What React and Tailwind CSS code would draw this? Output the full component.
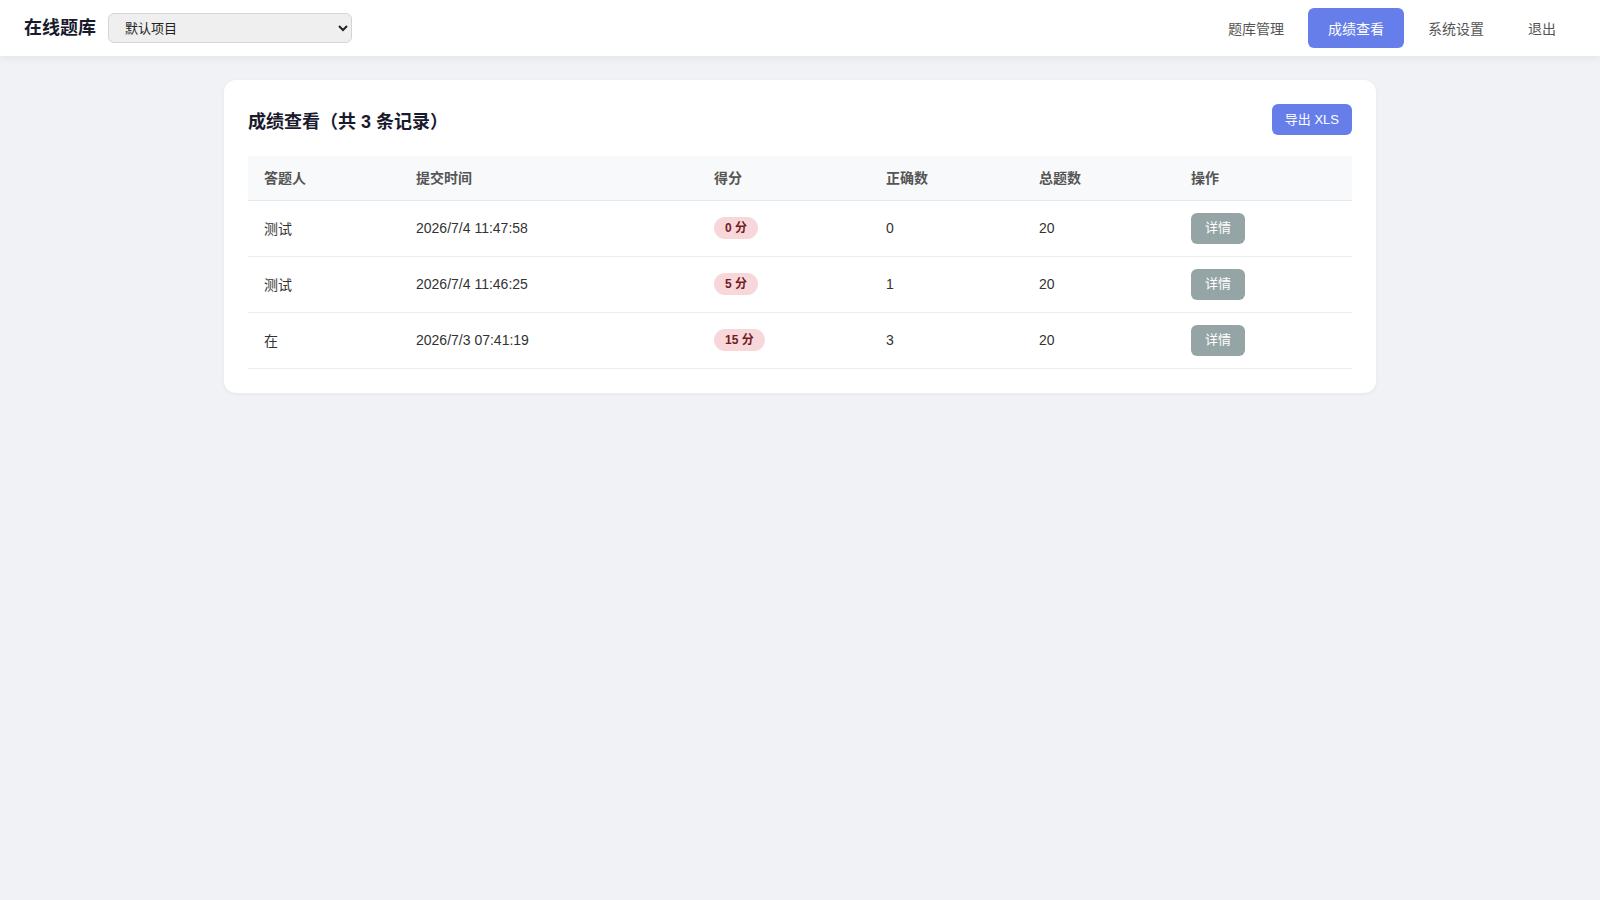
import React from 'react'

const records = [
  { name: '测试', time: '2026/7/4 11:47:58', score: 0, correct: 0, total: 20 },
  { name: '测试', time: '2026/7/4 11:46:25', score: 5, correct: 1, total: 20 },
  { name: '在', time: '2026/7/3 07:41:19', score: 15, correct: 3, total: 20 },
]

const navItems = ['题库管理', '成绩查看', '系统设置', '退出']

export default function App() {
  return (
    <div
      className="min-h-screen bg-[#f0f2f5] text-[#333]"
      style={{ fontFamily: '"Liberation Sans", "Noto Sans CJK SC", sans-serif' }}
    >
      {/* Top bar */}
      <header className="h-14 bg-white shadow-[0_2px_8px_rgba(0,0,0,0.06)] flex items-center justify-between pl-6 pr-6">
        <div className="flex items-center gap-3">
          <h1 className="text-lg font-bold text-[#1a1a2e]">在线题库</h1>
          <select className="w-[244px] h-[30px] px-3 text-[13px] text-[#222] bg-[#efefef] border border-[#d4d4d4] rounded-md">
            <option>默认项目</option>
          </select>
        </div>
        <nav className="flex items-center gap-1">
          {navItems.map((item) => (
            <button
              key={item}
              className={
                item === '成绩查看'
                  ? 'h-10 px-5 pt-[2px] rounded-md text-sm bg-[#667eea] text-white'
                  : 'h-10 px-5 pt-[2px] rounded-md text-sm text-[#555]'
              }
            >
              {item}
            </button>
          ))}
        </nav>
      </header>

      <main className="pt-6">
        <div className="w-[1152px] mx-auto bg-white rounded-xl shadow-[0_1px_4px_rgba(0,0,0,0.05)] p-6">
          <div className="flex items-start justify-between mb-4">
            <h2 className="text-lg leading-[36px] font-bold text-[#1a1a2e]">成绩查看（共 3 条记录）</h2>
            <button className="h-[31px] px-[13px] pt-[1px] rounded-md bg-[#667eea] text-white text-[13px]">
              导出 XLS
            </button>
          </div>

          <table className="w-full text-sm border-collapse">
            <thead>
              <tr className="bg-[#f8f9fa] h-11 border-b border-[#e8e8e8] text-left text-[#555]">
                <th className="w-[152px] px-4 font-bold">答题人</th>
                <th className="w-[298px] px-4 font-bold">提交时间</th>
                <th className="w-[172px] px-4 font-bold">得分</th>
                <th className="w-[153px] px-4 font-bold">正确数</th>
                <th className="w-[152px] px-4 font-bold">总题数</th>
                <th className="px-4 font-bold">操作</th>
              </tr>
            </thead>
            <tbody>
              {records.map((r, i) => (
                <tr key={i} className="h-[56px] border-b border-[#ececec]">
                  <td className="px-4 pt-[2px]">{r.name}</td>
                  <td className="px-4">{r.time}</td>
                  <td className="px-4">
                    <span className="inline-flex items-center h-[22px] px-[11px] rounded-full bg-[#f8d7da] text-[#721c24] text-xs font-bold">
                      {r.score} 分
                    </span>
                  </td>
                  <td className="px-4">{r.correct}</td>
                  <td className="px-4">{r.total}</td>
                  <td className="px-4">
                    <button className="h-[31px] px-[14px] pt-[1px] rounded-md bg-[#95a5a6] text-white text-[13px]">
                      详情
                    </button>
                  </td>
                </tr>
              ))}
            </tbody>
          </table>
        </div>
      </main>
    </div>
  )
}
